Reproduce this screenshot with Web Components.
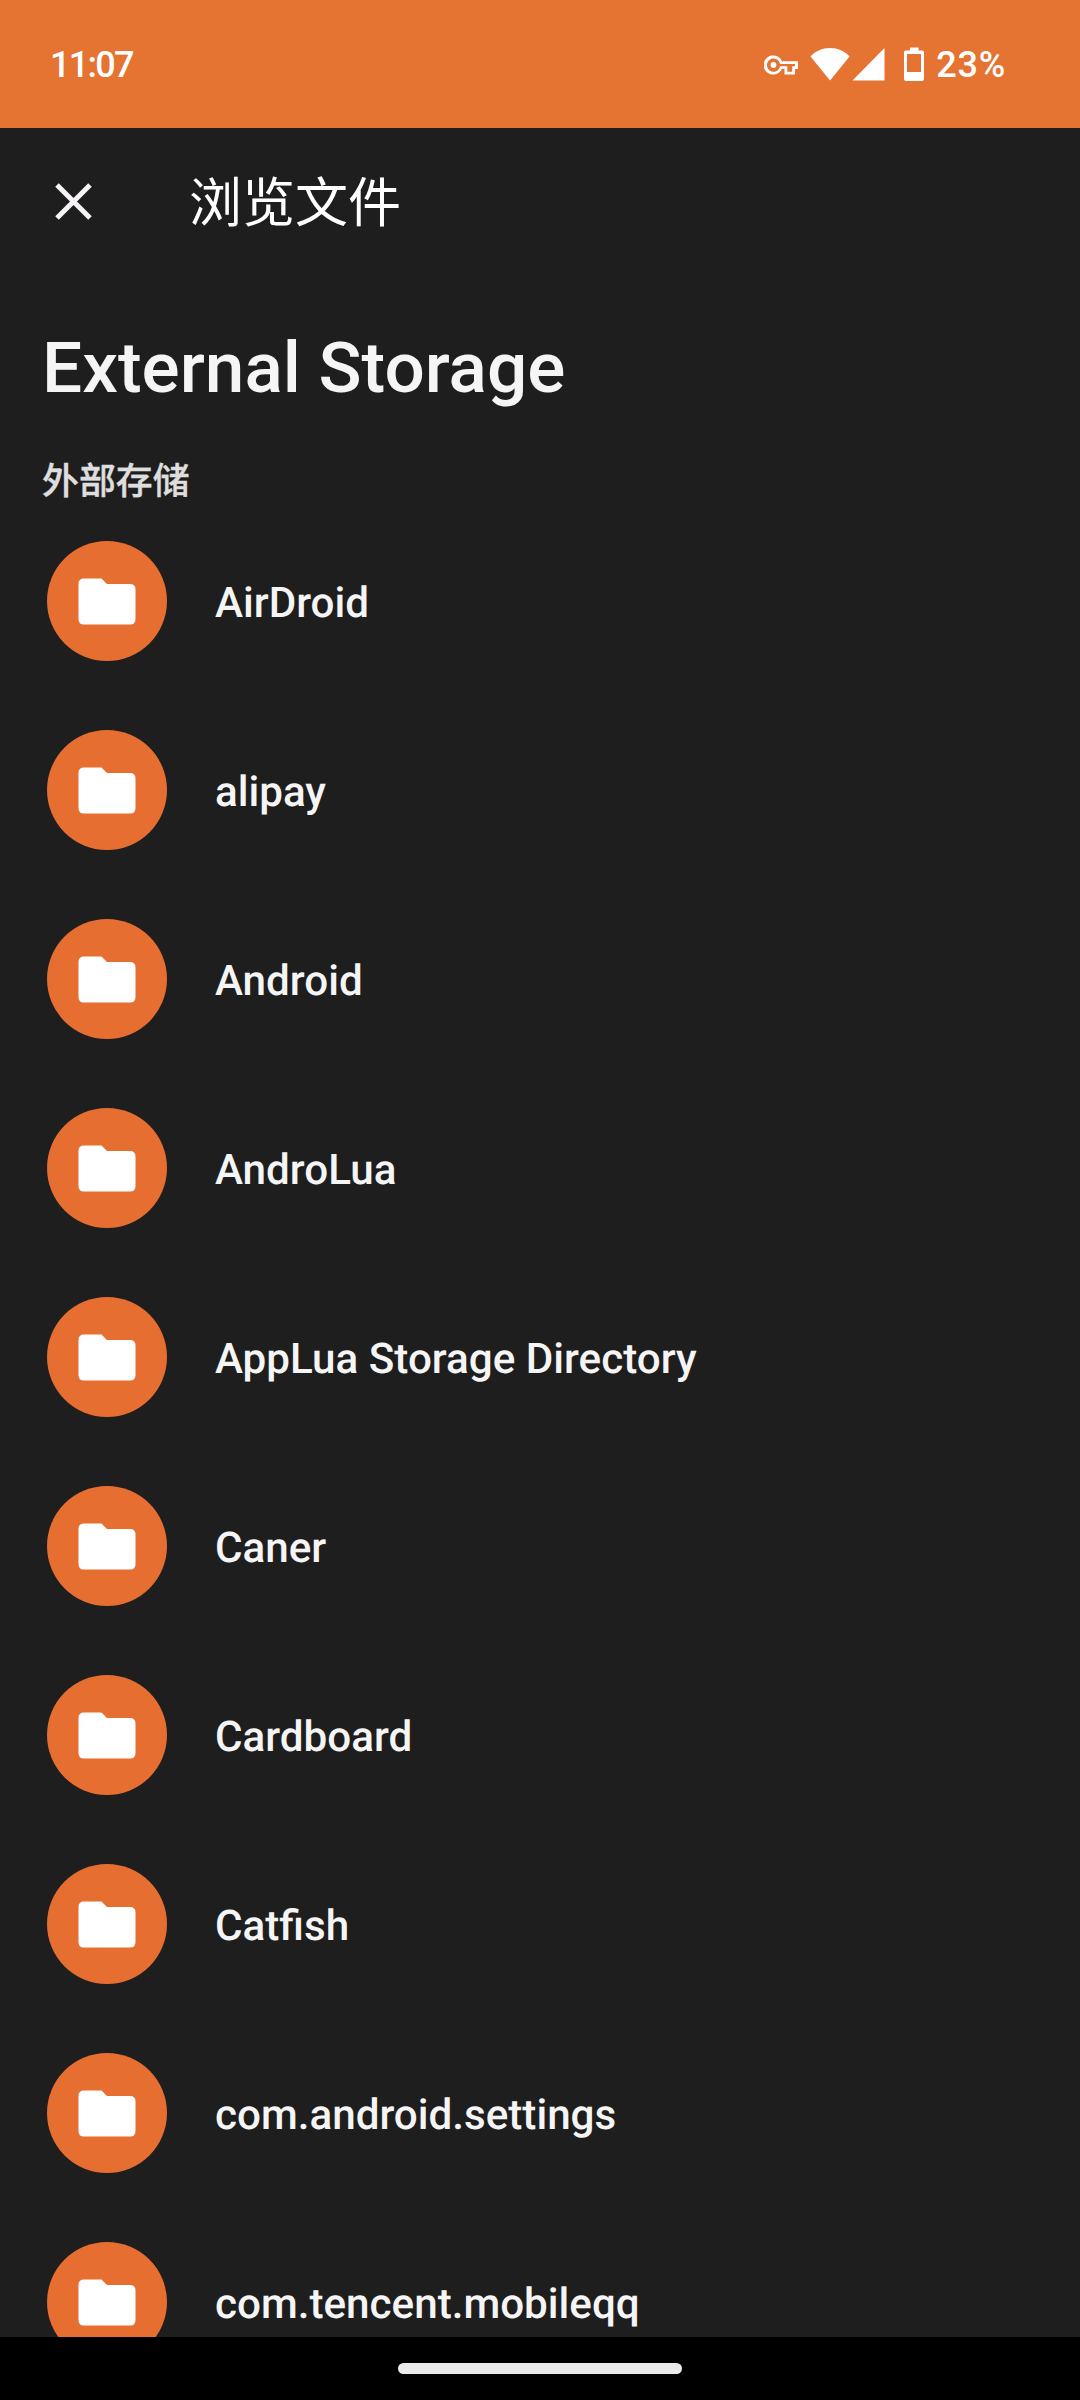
<!DOCTYPE html>
<html lang="zh-CN">
<head>
<meta charset="utf-8">
<title>浏览文件</title>
<style>
body{margin:0;background:#1e1e1e;font-family:Roboto,"Noto Sans CJK SC",sans-serif}
</style>
</head>
<body>
<file-browser></file-browser>
<script>
const define = (name, html, init) => {
  const t = document.createElement('template');
  t.innerHTML = html;
  customElements.define(name, class extends HTMLElement {
    constructor() {
      super();
      this.attachShadow({ mode: 'open' }).appendChild(t.content.cloneNode(true));
    }
    connectedCallback() { if (init) init(this, this.shadowRoot); }
  });
};

define('status-bar', `
<style>
:host{display:flex;align-items:center;justify-content:space-between;box-sizing:border-box;height:128px;padding:0 74px 0 50px;background:#e57331;color:#fff;font:500 36px/1 Roboto,"Noto Sans",sans-serif}
.time{letter-spacing:-1.700px;padding-top:2px}
.pct{letter-spacing:.8px;padding-top:2px}
.icons{display:flex;align-items:center}
svg{display:block;fill:#fff}
.key{margin:3px 11px 0 0}.wifi{margin-right:2px}.sig{margin-right:19px}.bat{margin-right:12px}
</style>
<span class="time">11:07</span>
<div class="icons">
<svg class="key" width="35" height="21" viewBox="0 0 35 21"><path fill-rule="evenodd" d="M18 6.200A9.600 9.600 0 1 0 18 13.800H20.500V19.500H31V14H34V6.200ZM16 9H31V11.300H28.200V16.700H23.300V11.300H16A6.600 6.600 0 1 1 16 9ZM9.500 7.100A2.900 2.900 0 1 0 9.500 12.900A2.900 2.900 0 1 0 9.500 7.100Z"/></svg>
<svg class="wifi" width="40" height="34" viewBox="0 0 40 34"><path d="M20 33.500L.5 9.500C5.500 4 12 1 20 1s14.500 3 19.500 8.500z"/></svg>
<svg class="sig" width="33" height="34" viewBox="0 0 33 34"><path d="M.5 33.500L32.500 1v32.500z"/></svg>
<svg class="bat" width="20" height="34" viewBox="0 0 20 34"><path fill-rule="evenodd" d="M6 0.500h8.500v3H18q2 0 2 2V32q0 2-2 2H2q-2 0-2-2V5.500q0-2 2-2h4zM3 7v18h14V7z"/></svg>
<span class="pct">23%</span>
</div>`);

define('app-bar', `
<style>
:host{display:flex;align-items:center;height:147px;padding:0 55px;gap:97px;color:#fff}
svg{display:block}
::slotted(*){font:400 53px/1 Roboto,"Noto Sans CJK SC",sans-serif;padding-top:5px}
</style>
<svg width="37" height="37" viewBox="0 0 37 37"><path d="M2 2L35 35M35 2L2 35" stroke="#f5f3f5" stroke-width="5" fill="none"/></svg>
<slot></slot>`);

define('storage-header', `
<style>
:host{display:block;padding:51px 42px 0}
h1{margin:0;font:500 71.100px/84px Roboto,sans-serif;color:#f5f5f5}
p{margin:46px 0 0;font:500 36.900px/44px "Noto Sans CJK SC",sans-serif;color:#dedede;-webkit-text-stroke:.4px #dedede}
</style>
<h1><slot name="title"></slot></h1>
<p><slot></slot></p>`);

define('folder-row', `
<style>
:host{display:flex;align-items:center;height:189px;padding-left:47.300px;gap:47.700px}
.avatar{display:flex;align-items:center;justify-content:center;width:120px;height:120px;border-radius:50%;background:#e66e31;flex:none}
svg{display:block}
.name{font:500 42.200px/50px Roboto,sans-serif;text-rendering:geometricPrecision;padding-top:6px;color:#f5f5f5;white-space:nowrap}
</style>
<div class="avatar"><svg width="58" height="47" viewBox="0 0 58 47"><path fill="#fff" d="M6 .5H23.500L29 6H52q5.500 0 5.500 5.500V41q0 5.500-5.500 5.500H6Q.5 46.500.5 41V6Q.5.5 6 .5z"/></svg></div>
<span class="name"><slot></slot></span>`);

define('nav-handle', `
<style>
:host{display:flex;justify-content:center;box-sizing:border-box;height:63px;padding-top:26px;background:#000}
i{width:284px;height:11px;border-radius:6px;background:#ebebeb}
</style><i></i>`);

define('file-browser', `
<style>
:host{display:flex;flex-direction:column;height:2400px;overflow:hidden;background:#1e1e1e}
status-bar,app-bar,storage-header,nav-handle{flex:none}
.list{flex:1;min-height:0;overflow:hidden;padding-top:6.500px}
</style>
<status-bar></status-bar>
<app-bar><span>浏览文件</span></app-bar>
<storage-header><span slot="title">External Storage</span>外部存储</storage-header>
<div class="list"></div>
<nav-handle></nav-handle>`, (host, root) => {
  const list = root.querySelector('.list');
  for (const name of ['AirDroid', 'alipay', 'Android', 'AndroLua', 'AppLua Storage Directory', 'Caner', 'Cardboard', 'Catfish', 'com.android.settings', 'com.tencent.mobileqq']) {
    const row = document.createElement('folder-row');
    row.textContent = name;
    list.appendChild(row);
  }
});
</script>
</body>
</html>
